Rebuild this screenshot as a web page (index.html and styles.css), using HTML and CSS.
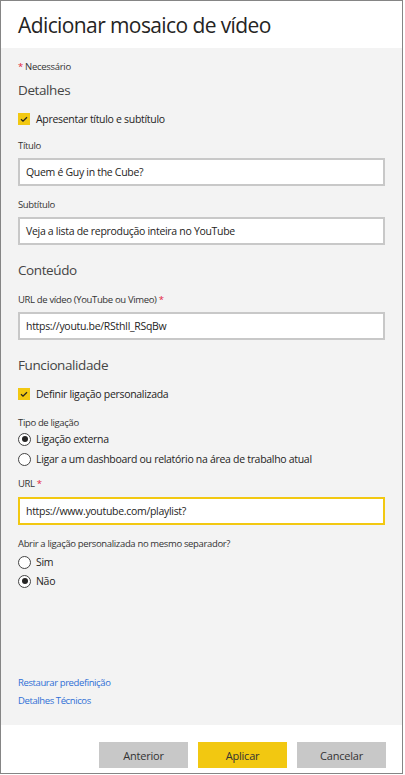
FILE: index.html
```html
<!DOCTYPE html>
<html lang="pt">
<head>
<meta charset="utf-8">
<link rel="stylesheet" href="styles.css">
</head>
<body>
<div class="dialog">
  <header class="header">
    <h1 class="title">Adicionar mosaico de vídeo</h1>
  </header>
  <main class="body">
    <div class="required"><span class="star">*</span> Necessário</div>

    <h2 class="section s-details">Detalhes</h2>
    <div class="check-row r-check1">
      <span class="checkbox"><svg viewBox="0 0 12 12" width="12" height="12"><path d="M3 6.2 L5 8.1 L9 4.2" fill="none" stroke="#252423" stroke-width="1.3"/></svg></span>
      <span class="row-text">Apresentar título e subtítulo</span>
    </div>

    <div class="label l-titulo">Título</div>
    <div class="input">Quem é Guy in the Cube?</div>

    <div class="label l-sub">Subtítulo</div>
    <div class="input">Veja a lista de reprodução inteira no YouTube</div>

    <h2 class="section s-content">Conteúdo</h2>
    <div class="label l-url">URL de vídeo (YouTube ou Vimeo) <span class="star">*</span></div>
    <div class="input">https://youtu.be/RSthIl_RSqBw</div>

    <h2 class="section s-func">Funcionalidade</h2>
    <div class="check-row r-check2">
      <span class="checkbox"><svg viewBox="0 0 12 12" width="12" height="12"><path d="M3 6.2 L5 8.1 L9 4.2" fill="none" stroke="#252423" stroke-width="1.3"/></svg></span>
      <span class="row-text">Definir ligação personalizada</span>
    </div>

    <div class="label l-tipo">Tipo de ligação</div>
    <div class="radio-row r-ext"><span class="radio on"></span><span class="row-text">Ligação externa</span></div>
    <div class="radio-row r-dash"><span class="radio"></span><span class="row-text">Ligar a um dashboard ou relatório na área de trabalho atual</span></div>

    <div class="label l-url2">URL <span class="star">*</span></div>
    <div class="input focus">https://www.youtube.com/playlist?</div>

    <div class="label l-abrir">Abrir a ligação personalizada no mesmo separador?</div>
    <div class="radio-row r-sim"><span class="radio"></span><span class="row-text">Sim</span></div>
    <div class="radio-row r-nao"><span class="radio on"></span><span class="row-text">Não</span></div>

    <div class="links">
      <a class="link" href="#">Restaurar predefinição</a>
      <a class="link" href="#">Detalhes Técnicos</a>
    </div>
  </main>
  <footer class="footer">
    <button class="btn">Anterior</button>
    <button class="btn primary">Aplicar</button>
    <button class="btn">Cancelar</button>
  </footer>
</div>
</body>
</html>
```
FILE: styles.css
```css
* { box-sizing: border-box; }
html, body { margin: 0; padding: 0; background: #ffffff; }
body { font-family: "Open Sans", "Noto Sans", sans-serif; color: #333; }

.dialog {
  width: 403px;
  height: 774px;
  border: 1px solid #858585;
  display: flex;
  flex-direction: column;
  background: #fff;
}

.header {
  height: 47px;
  flex: none;
  padding: 0 17px;
  display: flex;
  align-items: center;
}
.title {
  margin: 0;
  font-size: 21px;
  font-weight: 400;
  color: #252423;
  letter-spacing: -0.6px;
}

.body {
  flex: 1;
  background: #f3f3f3;
  padding: 12px 17px 16px;
  display: flex;
  flex-direction: column;
}

.required { font-size: 9.5px; line-height: 14px; color: #333; letter-spacing: -0.3px; }
.star { color: #e3203a; }

.section {
  margin: 0;
  font-size: 13.5px;
  font-weight: 400;
  line-height: 20px;
  color: #454545;
  letter-spacing: -0.4px;
}
.s-details { margin-top: 6px; }
.s-content { margin-top: 15px; }
.s-func { margin-top: 15px; }

.check-row, .radio-row {
  display: flex;
  align-items: center;
  height: 16px;
  font-size: 10.5px;
  color: #252423;
  letter-spacing: -0.3px;
}
.r-check1 { margin-top: 11px; }
.r-check2 { margin-top: 11px; }
.checkbox {
  width: 12px; height: 12px;
  background: #f2c811;
  display: inline-flex;
  margin-right: 6px;
}
.row-text { white-space: nowrap; }

.radio {
  width: 13px; height: 13px;
  border: 1px solid #444;
  border-radius: 50%;
  margin-right: 5px;
  background: #fff;
  display: inline-flex;
  align-items: center;
  justify-content: center;
}
.radio.on::after {
  content: "";
  width: 6px; height: 6px;
  border-radius: 50%;
  background: #252423;
}

.label { font-size: 9.5px; line-height: 14px; color: #333; letter-spacing: -0.35px; }
.l-titulo { margin-top: 12px; }
.l-sub { margin-top: 12px; }
.l-url { margin-top: 13px; }
.l-tipo { margin-top: 14px; }
.l-url2 { margin-top: 10px; }
.l-abrir { margin-top: 12px; }

.r-ext { margin-top: 1px; }
.r-dash { margin-top: 4px; }
.r-sim { margin-top: 3px; }
.r-nao { margin-top: 3px; }

.input {
  margin-top: 5px;
  height: 28px;
  width: 367px;
  border: 2px solid #c8c8c8;
  background: #fff;
  padding: 0 6px;
  font-size: 10.5px;
  line-height: 24px;
  color: #252423;
  white-space: nowrap;
  letter-spacing: -0.3px;
}
.input.focus { border-color: #f2c811; margin-top: 6px; }

.links {
  margin-top: auto;
  display: flex;
  flex-direction: column;
  gap: 2px;
}
.link {
  font-size: 9.5px;
  line-height: 16px;
  color: #2f6fd6;
  text-decoration: none;
  letter-spacing: -0.4px;
}

.footer {
  height: 48px;
  flex: none;
  display: flex;
  justify-content: flex-end;
  align-items: flex-start;
  gap: 10px;
  padding: 17px 16px 0 0;
}
.btn {
  width: 89px;
  height: 26px;
  border: none;
  background: #c8c8c8;
  font-family: "Open Sans", "Noto Sans", sans-serif;
  font-size: 11px;
  color: #333;
  padding: 0;
  letter-spacing: -0.2px;
}
.btn.primary { background: #f2c811; }
```
